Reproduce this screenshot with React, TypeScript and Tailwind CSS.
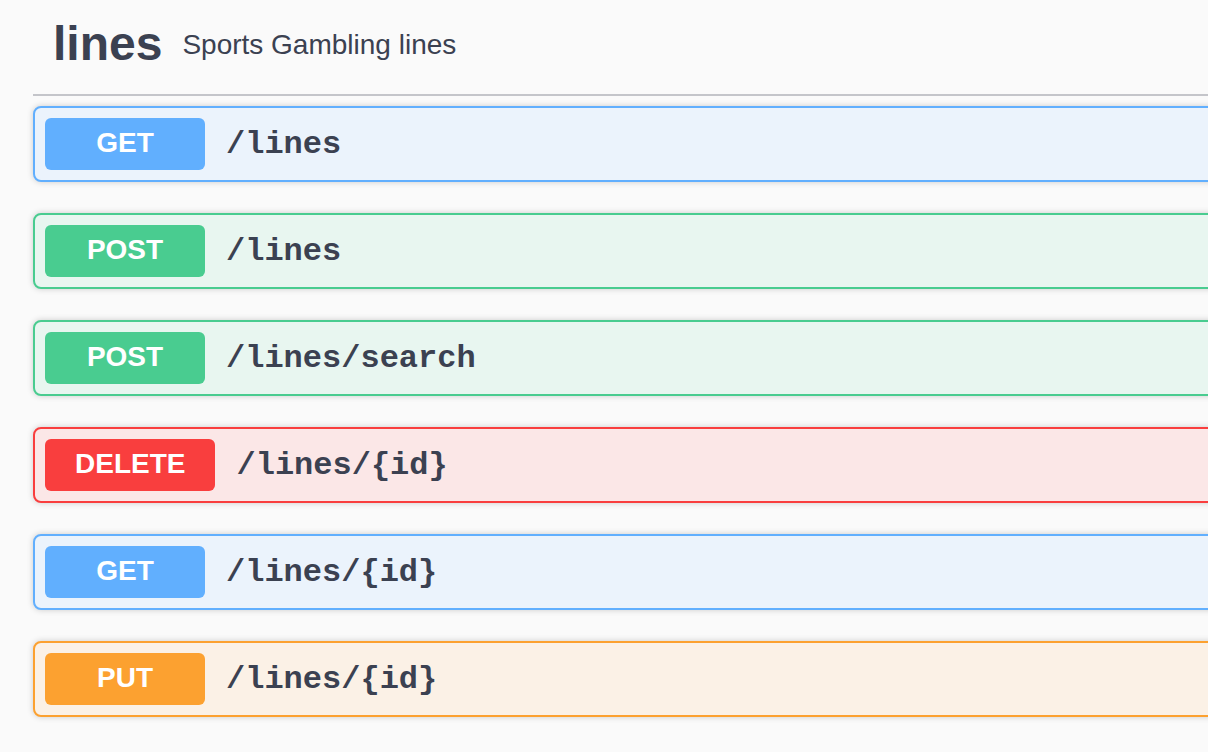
const ops = [
  { method: "GET", path: "/lines" },
  { method: "POST", path: "/lines" },
  { method: "POST", path: "/lines/search" },
  { method: "DELETE", path: "/lines/{id}" },
  { method: "GET", path: "/lines/{id}" },
  { method: "PUT", path: "/lines/{id}" },
];

const styles: Record<string, { row: string; badge: string }> = {
  GET: { row: "bg-[#ebf3fc] border-[#61affe]", badge: "bg-[#61affe]" },
  POST: { row: "bg-[#e8f6f0] border-[#49cc90]", badge: "bg-[#49cc90]" },
  DELETE: { row: "bg-[#fbe7e7] border-[#f93e3e]", badge: "bg-[#f93e3e]" },
  PUT: { row: "bg-[#fbf1e6] border-[#fca130]", badge: "bg-[#fca130]" },
};

function OpBlock({ method, path }: { method: string; path: string }) {
  const s = styles[method];
  return (
    <div className={`flex items-center border-2 rounded-[8px] p-[10px] shadow-[0_0_6px_rgba(0,0,0,0.19)] ${s.row}`}>
      <span
        className={`flex items-center justify-center h-[52px] min-w-[160px] px-[30px] pb-[3px] rounded-[6px] text-white font-bold text-[28px] leading-none ${s.badge}`}
      >
        {method}
      </span>
      <span className="pl-[21px] pt-[1px] text-[32px] font-bold text-[#3b4151] font-['Liberation_Mono',monospace]">
        {path}
      </span>
    </div>
  );
}

export default function App() {
  return (
    <div className="w-full min-h-screen overflow-hidden bg-[#fafafa] font-['Liberation_Sans',Arial,sans-serif]">
      <div className="w-[1320px] pl-[33px]">
        <div className="flex items-center pl-[20px] pt-[20px] pb-[26px] border-b-2 border-[#c4c5ca] text-[#3b4151]">
          <h4 className="text-[48px] font-bold leading-[48px]">lines</h4>
          <small className="pl-[20px] pt-[2px] text-[28px] leading-[28px]">Sports Gambling lines</small>
        </div>
        <div className="flex flex-col gap-[31px] pt-[10px]">
          {ops.map((op, i) => (
            <OpBlock key={i} method={op.method} path={op.path} />
          ))}
        </div>
      </div>
    </div>
  );
}
